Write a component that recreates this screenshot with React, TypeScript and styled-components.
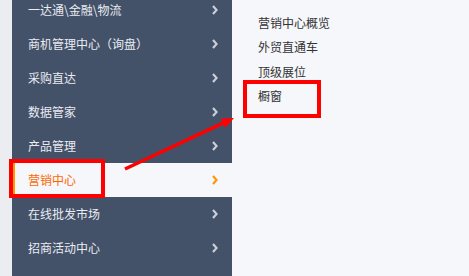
import React from "react";
import styled, { createGlobalStyle } from "styled-components";

const GlobalStyle = createGlobalStyle`
  html, body { margin: 0; padding: 0; }
  body {
    width: 469px;
    height: 276px;
    overflow: hidden;
    font-family: "Noto Sans CJK SC", "Liberation Sans", sans-serif;
  }
`;

const Page = styled.div`
  position: relative;
  display: flex;
  width: 469px;
  height: 276px;
  overflow: hidden;
  background: #f5f7fb;
`;

const Gutter = styled.div`
  width: 12px;
  flex: none;
  background: #ebedf1;
`;

const Sidebar = styled.nav`
  width: 220px;
  flex: none;
  background: #435169;
  display: flex;
  flex-direction: column;
  padding-top: 0;
  margin-top: 0;
`;

const MenuList = styled.ul`
  list-style: none;
  margin: -7px 0 0 0;
  padding: 0;
  display: flex;
  flex-direction: column;
`;

const MenuItem = styled.li<{ $active?: boolean }>`
  position: relative;
  height: 34px;
  display: flex;
  align-items: center;
  justify-content: space-between;
  box-sizing: border-box;
  padding: 0 14px 0 ${(p) => (p.$active ? "13px" : "16px")};
  border-left: ${(p) => (p.$active ? "3px solid #ff9900" : "none")};
  background: ${(p) => (p.$active ? "#f5f7fb" : "transparent")};
  color: ${(p) => (p.$active ? "#ff6600" : "#e9ecf1")};
  font-size: 12px;
  line-height: 12px;
  white-space: nowrap;
`;

const Chevron = styled.svg`
  width: 6px;
  height: 10px;
  flex: none;
`;

const Panel = styled.section`
  flex: 1;
  padding: 10.75px 0 0 26px;
`;

const SubList = styled.ul`
  list-style: none;
  margin: 0;
  padding: 0;
`;

const SubItem = styled.li`
  position: relative;
  height: 24.5px;
  line-height: 24.5px;
  font-size: 12px;
  color: #333;
  white-space: nowrap;
`;

const Highlight = styled.span<{ $l: number; $t: number; $w: number; $h: number }>`
  position: absolute;
  left: ${(p) => p.$l}px;
  top: ${(p) => p.$t}px;
  width: ${(p) => p.$w}px;
  height: ${(p) => p.$h}px;
  box-sizing: border-box;
  border: 4px solid #ff0000;
  pointer-events: none;
`;

const Annotation = styled.svg`
  position: absolute;
  left: 0;
  top: 0;
  width: 469px;
  height: 276px;
  pointer-events: none;
`;

const menu = [
  "一达通\\金融\\物流",
  "商机管理中心（询盘）",
  "采购直达",
  "数据管家",
  "产品管理",
  "营销中心",
  "在线批发市场",
  "招商活动中心",
];

const subs = ["营销中心概览", "外贸直通车", "顶级展位", "橱窗"];

const ChevronIcon = ({ color }: { color: string }) => (
  <Chevron viewBox="0 0 6 10">
    <polyline points="1,1 4.6,5 1,9" fill="none" stroke={color} strokeWidth="2.2" />
  </Chevron>
);

export default function App() {
  return (
    <>
      <GlobalStyle />
      <Page>
        <Gutter />
        <Sidebar>
          <MenuList>
            {menu.map((m) => {
              const active = m === "营销中心";
              return (
                <MenuItem key={m} $active={active}>
                  <span>{m}</span>
                  <ChevronIcon color={active ? "#ff9900" : "#c9ced8"} />
                  {active && <Highlight $l={-6} $t={-4} $w={96} $h={39} />}
                </MenuItem>
              );
            })}
          </MenuList>
        </Sidebar>
        <Panel>
          <SubList>
            {subs.map((s) => (
              <SubItem key={s}>
                {s}
                {s === "橱窗" && <Highlight $l={-15} $t={-4} $w={78} $h={38} />}
              </SubItem>
            ))}
          </SubList>
        </Panel>
        <Annotation viewBox="0 0 469 276">
          <line x1="125" y1="169" x2="224" y2="122.6" stroke="#ff0000" strokeWidth="3.5" />
          <polygon points="234,118 225.4,127.8 220.8,118.4" fill="#ff0000" />
        </Annotation>
      </Page>
    </>
  );
}
